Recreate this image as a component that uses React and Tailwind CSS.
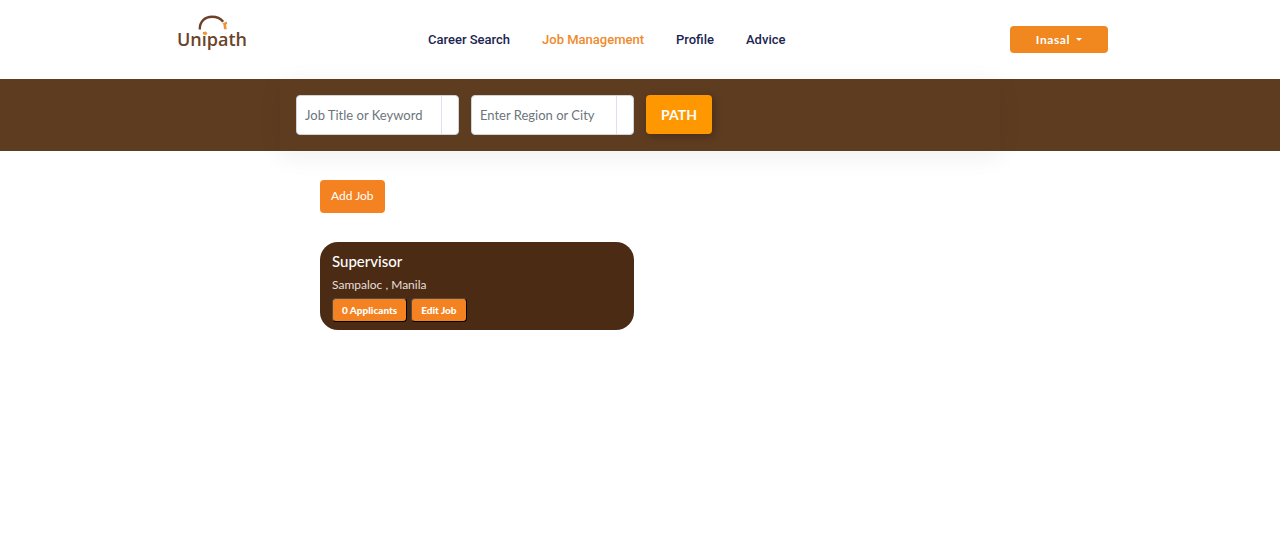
const navItems = [
  { label: 'Career Search', active: false },
  { label: 'Job Management', active: true },
  { label: 'Profile', active: false },
  { label: 'Advice', active: false },
];

const jobs = [{ title: 'Supervisor', location: 'Sampaloc , Manila', applicants: 0 }];

function Logo() {
  return (
    <svg width="80" height="44" viewBox="0 0 80 44" role="img" aria-label="Unipath">
      <path d="M27.800 17.500C27.500 9.500 33 4.800 40 4.800C45 4.800 48.500 6.500 51.200 9.700" fill="none" stroke="#6b4026" strokeWidth="2.400" />
      <path d="M50.500 11.500L54.500 9.600L55.400 11.500L54 12.800L54.800 17.300L52 17.300L51.500 12.700Z" fill="#ee9438" />
      <text x="5" y="34" fill="#6b4429" fontSize="18" fontWeight="600" fontFamily="Open Sans, sans-serif">Unipath</text>
      <circle cx="33.200" cy="21.300" r="1.900" fill="#f39a3a" />
    </svg>
  );
}

function SearchField({ label }) {
  return (
    <div className="flex h-10 w-[163px] rounded border border-[#ced4da] bg-white">
      <input
        type="text"
        aria-label={label}
        placeholder={label}
        className="min-w-0 flex-1 bg-transparent pt-0.5 pl-2 font-[Lato,sans-serif] text-[13px] text-[#495057] outline-none placeholder:text-[#6c757d]"
      />
      <span className="w-[17px] border-l border-[#dfdff0]" />
    </div>
  );
}

function JobCard({ job }) {
  const action =
    'h-6 rounded border border-t-[#4d4d4d] border-r-black border-b-black border-l-[#4d4d4d] bg-[#f58220] px-[9px] text-[10px] leading-4 font-black text-white';
  return (
    <article className="rounded-[18px] bg-[#4c2b14] px-3 pt-[7px] pb-2 text-white">
      <h2 className="text-[15px] leading-6 font-medium">{job.title}</h2>
      <p className="mt-1 text-xs leading-4 text-[#e5dfda]">{job.location}</p>
      <div className="mt-[5px] flex gap-1">
        <button type="button" className={action}>{job.applicants} Applicants</button>
        <button type="button" className={action}>Edit Job</button>
      </div>
    </article>
  );
}

export default function App() {
  return (
    <div className="min-h-screen bg-white font-[Lato,sans-serif]">
      <header className="mx-auto flex h-[79px] max-w-[936px] items-center">
        <a href="#home" className="-mt-3 shrink-0"><Logo /></a>
        <nav className="ml-44 flex gap-8 font-[Roboto,sans-serif] text-[13px] leading-5 font-medium whitespace-nowrap">
          {navItems.map((item) => (
            <a key={item.label} href="#nav" className={item.active ? 'text-[#ef8a2c]' : 'text-[#1b2552]'}>
              {item.label}
            </a>
          ))}
        </nav>
        <button type="button" className="ml-auto flex h-[27px] w-[98px] items-center justify-center gap-1.5 rounded bg-[#f0871f] text-xs font-bold tracking-wider text-white">
          Inasal
          <svg width="6" height="3" viewBox="0 0 6 3" aria-hidden="true"><path d="M0 0H6L3 3Z" fill="currentColor" /></svg>
        </button>
      </header>

      <section className="bg-[#5e3c20]">
        <form className="mx-auto flex max-w-[720px] gap-3 px-4 py-4 shadow-[0_5px_25px_rgba(31,31,61,0.07)]">
          <SearchField label="Job Title or Keyword" />
          <SearchField label="Enter Region or City" />
          <button type="button" className="h-[39px] w-[66px] rounded bg-[#ff9800] text-sm font-bold text-white shadow-[2px_2px_8px_rgba(0,0,0,0.25)]">
            PATH
          </button>
        </form>
      </section>

      <main className="mx-auto max-w-[640px] pt-[29px]">
        <button type="button" className="block h-[33px] rounded bg-[#f58220] px-[11px] pb-0.5 text-xs text-white">Add Job</button>
        <div className="mt-[29px] grid grid-cols-2 gap-3">
          {jobs.map((job) => <JobCard key={job.title} job={job} />)}
        </div>
      </main>
    </div>
  );
}
